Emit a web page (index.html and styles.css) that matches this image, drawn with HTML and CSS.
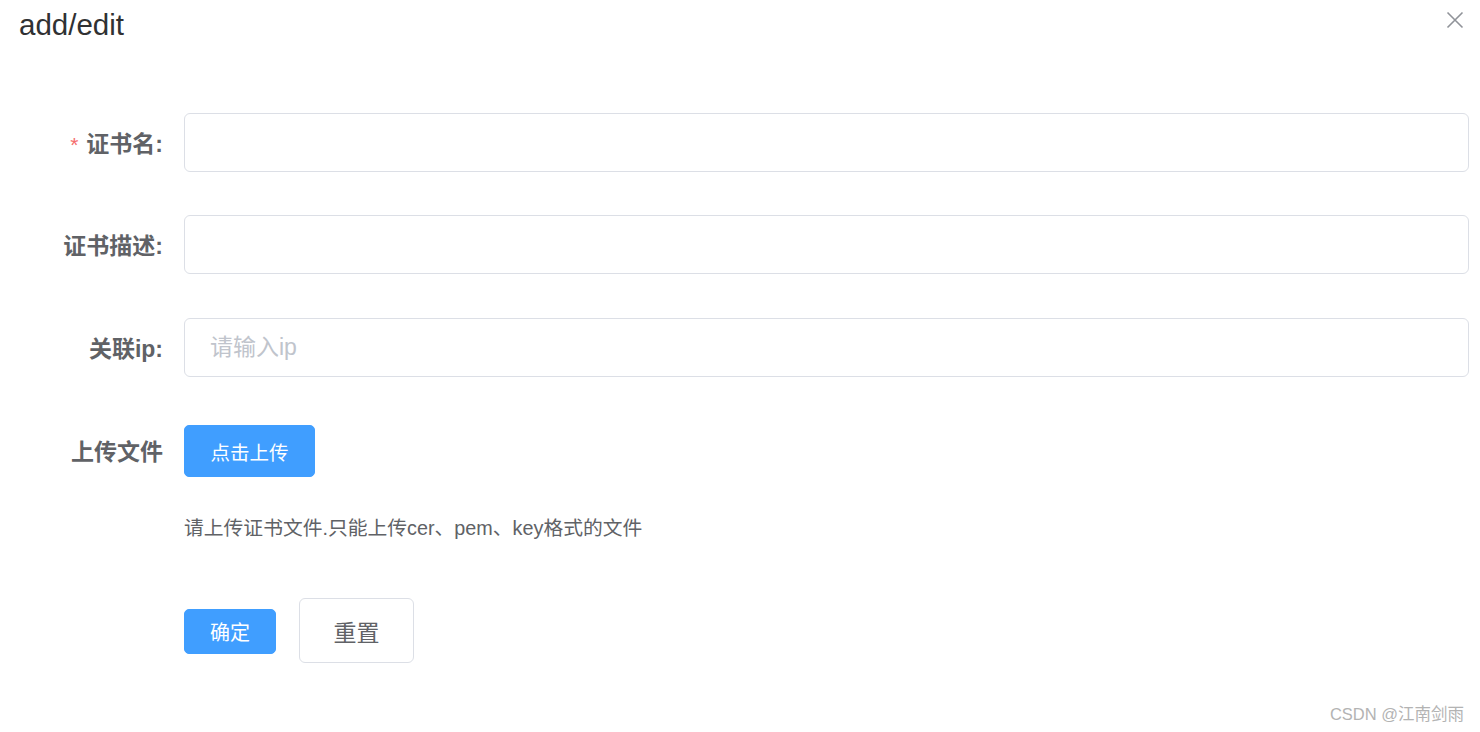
FILE: index.html
```html
<!DOCTYPE html>
<html lang="zh">
<head>
<meta charset="utf-8">
<title>add/edit</title>
<link rel="stylesheet" href="styles.css">
</head>
<body>
<div class="dialog">
  <div class="dialog-header">
    <span class="dialog-title">add/edit</span>
    <button class="dialog-close" aria-label="close">
      <svg width="18" height="18" viewBox="0 0 18 18"><path d="M1.5 1.5 L16.5 16.5 M16.5 1.5 L1.5 16.5" stroke="#909399" stroke-width="1.6" fill="none"/></svg>
    </button>
  </div>
  <form class="form">
    <div class="form-item item-input">
      <label class="form-label"><span class="req">*</span>证书名:</label>
      <div class="form-content"><input class="input" type="text"></div>
    </div>
    <div class="form-item item-input item-desc">
      <label class="form-label">证书描述:</label>
      <div class="form-content"><input class="input" type="text"></div>
    </div>
    <div class="form-item item-input item-ip">
      <label class="form-label">关联ip:</label>
      <div class="form-content"><input class="input" type="text" placeholder="请输入ip"></div>
    </div>
    <div class="form-item item-upload">
      <label class="form-label label-upload">上传文件</label>
      <div class="form-content upload-content">
        <button type="button" class="btn btn-primary btn-upload">点击上传</button>
        <div class="tip">请上传证书文件.只能上传cer、pem、key格式的文件</div>
      </div>
    </div>
    <div class="form-item item-actions">
      <div class="form-label"></div>
      <div class="form-content actions">
        <button type="button" class="btn btn-primary btn-confirm">确定</button>
        <button type="button" class="btn btn-default btn-reset">重置</button>
      </div>
    </div>
  </form>
  <div class="watermark">CSDN @江南剑雨</div>
</div>
</body>
</html>
```

FILE: styles.css
```css
* { box-sizing: border-box; }
html, body {
  margin: 0;
  padding: 0;
  background: #ffffff;
}
body {
  font-family: "Liberation Sans", Arial, "Noto Sans CJK SC", sans-serif;
  color: #606266;
  width: 1480px;
  height: 732px;
  overflow: hidden;
}
.dialog {
  position: relative;
  width: 1480px;
  height: 732px;
}
.dialog-header {
  padding: 8px 19px 0 19px;
  height: 60px;
}
.dialog-title {
  font-size: 29.5px;
  line-height: 34px;
  color: #303133;
}
.dialog-close {
  position: absolute;
  top: 11px;
  left: 1446px;
  width: 18px;
  height: 18px;
  padding: 0;
  border: none;
  background: transparent;
  cursor: pointer;
  line-height: 0;
}
.form {
  padding-top: 53px;
}
.form-item {
  display: flex;
  align-items: flex-start;
}
.form-label {
  flex: 0 0 184px;
  padding-right: 21px;
  text-align: right;
  font-size: 23px;
  font-weight: bold;
  color: #606266;
  font-family: "Liberation Sans", Arial, "Noto Sans CJK SC", sans-serif;
}
.item-input .form-label {
  height: 59px;
  line-height: 62px;
}
.req {
  color: #f56c6c;
  font-size: 21px;
  margin-right: 8px;
  font-weight: normal;
}
.form-content {
  flex: 0 0 1285px;
}
.item-input {
  margin-bottom: 43px;
}
.item-desc {
  margin-bottom: 44px;
}
.item-ip {
  margin-bottom: 48px;
}
.input {
  display: block;
  width: 100%;
  height: 59px;
  border: 1px solid #dcdfe6;
  border-radius: 6px;
  padding: 0 25px;
  font-size: 23px;
  color: #606266;
  font-family: "Liberation Sans", Arial, "Noto Sans CJK SC", sans-serif;
  outline: none;
  background: #fff;
}
.input::placeholder {
  color: #c0c4cc;
}
.label-upload {
  height: 52px;
  line-height: 54px;
}
.btn {
  display: inline-flex;
  align-items: center;
  justify-content: center;
  padding: 0;
  cursor: pointer;
  font-family: "Liberation Sans", Arial, "Noto Sans CJK SC", sans-serif;
}
.btn-primary {
  background: #409eff;
  border: 1px solid #409eff;
  color: #ffffff;
  border-radius: 5px;
}
.btn-default {
  background: #ffffff;
  border: 1px solid #dcdfe6;
  color: #606266;
  border-radius: 6px;
}
.btn-upload {
  width: 131px;
  height: 52px;
  font-size: 19.5px;
}
.tip {
  margin-top: 37px;
  font-size: 19.8px;
  line-height: 28px;
  color: #606266;
}
.item-actions {
  margin-top: 56px;
}
.actions {
  display: flex;
  align-items: center;
  gap: 23px;
}
.btn-confirm {
  width: 92px;
  height: 45px;
  font-size: 20px;
  margin-top: 1px;
}
.btn-reset {
  width: 115px;
  height: 65px;
  font-size: 23px;
}
.watermark {
  position: absolute;
  right: 16px;
  top: 703px;
  font-size: 16.5px;
  line-height: 22px;
  color: #b3b3b3;
}
```
